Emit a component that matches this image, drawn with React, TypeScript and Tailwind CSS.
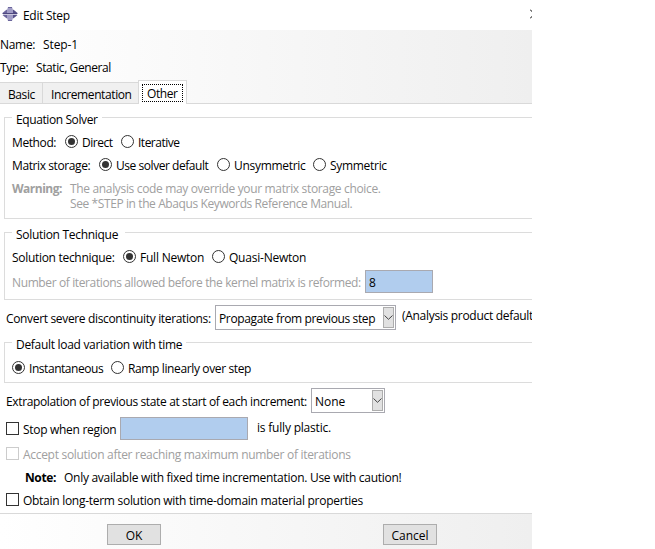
import React from 'react';
import clsx from 'clsx';

type LabelProps = {
  className?: string;
  children: React.ReactNode;
};

// single line of dialog text
const Label = ({ className, children }: LabelProps) => (
  <span className={clsx('block h-4 shrink-0 leading-[17px] whitespace-pre', className)}>
    {children}
  </span>
);

const Radio = ({ checked }: { checked?: boolean }) => (
  <svg className="block size-[13px] shrink-0" viewBox="0 0 13 13">
    <circle cx="6.5" cy="6.5" r="6" fill="#fff" stroke="#333" />
    {checked && <circle cx="6.5" cy="6.5" r="3.5" fill="#333" />}
  </svg>
);

const Checkbox = ({ disabled }: { disabled?: boolean }) => (
  <span
    className={clsx(
      'block size-[13px] shrink-0 border bg-white',
      disabled ? 'border-[#cccccc]' : 'border-[#333333]'
    )}
  />
);

const Select = ({ className, children }: LabelProps) => (
  <div
    className={clsx(
      'flex h-[25px] shrink-0 items-center justify-between border border-[#a9a9b0] bg-white pr-px pl-[3px]',
      className
    )}
  >
    {children}
    <span className="flex h-[21px] w-[11px] items-center justify-center border border-[#adadad] bg-[#e1e1e1]">
      <svg className="block h-[5px] w-[9px] shrink-0" viewBox="0 0 9 5">
        <path d="M0.5 0.5L4.5 4.3L8.5 0.5" fill="none" stroke="#444" />
      </svg>
    </span>
  </div>
);

type GroupProps = {
  title: string;
  titleClass: string;
  className: string;
  children: React.ReactNode;
};

const Group = ({ title, titleClass, className, children }: GroupProps) => (
  <section className={clsx('ml-1 shrink-0 border-y border-l border-[#dcdcdc]', className)}>
    <h2 className={clsx('-mt-[7px] ml-[7px] h-4 bg-white pl-1 leading-[17px] whitespace-pre', titleClass)}>
      {title}
    </h2>
    {children}
  </section>
);

const App = () => {
  return (
    <div className="h-[549px] w-[655px] bg-white">
      <div className="flex h-full w-[532px] flex-col overflow-hidden font-['Open_Sans','Noto_Sans',sans-serif] text-[12px] tracking-[-0.3px] text-black">
        <header className="flex h-[30px] shrink-0 items-center pl-[2px]">
          <svg className="mt-[-2px] block size-4 shrink-0" viewBox="0 0 16 16">
            <path d="M5 4L6 1H10L11 4V7H5Z" fill="#a19dc6" />
            <path d="M5 12L6 15H10L11 12V9H5Z" fill="#a19dc6" />
            <path d="M5 3.500V7H0.500L3.500 4.500Z" fill="#6b659c" />
            <path d="M11 3.500V7H15.500L12.500 4.500Z" fill="#565089" />
            <path d="M5 12.500V9H0.500L3.500 11.500Z" fill="#6b659c" />
            <path d="M11 12.500V9H15.500L12.500 11.500Z" fill="#565089" />
            <path d="M6 1.500H10M6 14.500H10" stroke="#6b659c" />
            <path d="M0.500 7.500H15.500" stroke="#4d477f" />
            <path d="M1 8.500H15" stroke="#c9c7dc" />
          </svg>
          <Label className="ml-[5px] w-[507px]">Edit Step</Label>
          <svg className="block size-[10px] shrink-0 mt-[-2px]" viewBox="0 0 10 10">
            <path d="M0 0.500L9.500 10M0 9.500L9.500 0" stroke="#000" />
          </svg>
        </header>

        <div className="flex h-[74px] shrink-0 flex-col bg-linear-to-r from-white to-[#efefef]">
          <div className="flex h-[23px] pt-[6px]">
            <Label className="w-[43px]">Name:</Label>
            <Label className="tracking-[-0.1px]">Step-1</Label>
          </div>
          <div className="flex h-[27px] pt-[6px]">
            <Label className="w-[36px]">Type:</Label>
            <Label className="tracking-[-0.4px]">Static, General</Label>
          </div>
          <nav className="flex h-6 items-end tracking-[-0.4px]">
            <div className="h-[22px] w-[42px] border-y border-[#d9d9d9] bg-[#f0f0f0] pt-[3px] pl-2">
              <Label>Basic</Label>
            </div>
            <div className="h-[22px] w-[96px] border-y border-l border-[#d9d9d9] bg-[#f0f0f0] pt-[3px] pl-2">
              <Label>Incrementation</Label>
            </div>
            <div className="h-6 w-[49px] border-x border-t border-[#d9d9d9] bg-white p-[3px]">
              <div className="h-[18px] border border-dotted border-black pl-1">
                <Label>Other</Label>
              </div>
            </div>
            <div className="h-px flex-1 bg-[#d9d9d9]" />
          </nav>
        </div>

        <main className="flex h-[409px] shrink-0 flex-col pt-[13px]">
          <Group title="Equation Solver" titleClass="w-[90px] tracking-[-0.4px]" className="h-[102px]">
            <div className="mt-[3px] flex h-[23px] items-center pl-[7px] tracking-[-0.5px]">
              <Label className="w-[53px] tracking-[-0.4px]">Method:</Label>
              <Radio checked />
              <Label className="w-[43px] pl-1">Direct</Label>
              <Radio />
              <Label className="pl-1">Iterative</Label>
            </div>
            <div className="flex h-[23px] items-center pl-[7px]">
              <Label className="w-[87px] tracking-[-0.4px]">Matrix storage:</Label>
              <Radio checked />
              <Label className="w-[105px] pl-1 tracking-[-0.45px]">Use solver default</Label>
              <Radio />
              <Label className="w-[83px] pl-1">Unsymmetric</Label>
              <Radio />
              <Label className="pl-1">Symmetric</Label>
            </div>
            <div className="flex pt-[4px] pl-[7px] text-[#a0a0a0]">
              <Label className="w-[58px] font-bold tracking-[-0.5px]">Warning:</Label>
              <div className="flex flex-col">
                <Label className="-mb-px tracking-[-0.34px]">
                  The analysis code may override your matrix storage choice.
                </Label>
                <Label className="tracking-[-0.4px]">See *STEP in the Abaqus Keywords Reference Manual.</Label>
              </div>
            </div>
          </Group>

          <Group title="Solution Technique" titleClass="w-[113px]" className="mt-[13px] h-[68px]">
            <div className="mt-[2px] flex h-[25px] items-center pl-[7px]">
              <Label className="w-[111px] tracking-[-0.3px]">Solution technique:</Label>
              <Radio checked />
              <Label className="w-[76px] pl-1 tracking-[-0.22px]">Full Newton</Label>
              <Radio />
              <Label className="pl-1 tracking-[-0.22px]">Quasi-Newton</Label>
            </div>
            <div className="mt-[1px] flex h-[23px] items-center pl-[7px]">
              <Label className="w-[353px] tracking-[-0.38px] text-[#a0a0a0]">
                Number of iterations allowed before the kernel matrix is reformed:
              </Label>
              <div className="flex h-[23px] w-[68px] items-center border border-[#a9a9b0] bg-[#b1cdee] pl-[3px]">
                <Label>8</Label>
              </div>
            </div>
          </Group>

          <div className="mt-[5px] flex h-[25px] shrink-0 items-center pl-[6px]">
            <Label className="w-[209px] tracking-[-0.34px]">Convert severe discontinuity iterations:</Label>
            <Select className="w-[181px]">
              <Label className="tracking-[-0.37px]">Propagate from previous step</Label>
            </Select>
            <Label className="-mt-[5px] ml-[6px] w-[130px] overflow-hidden tracking-[-0.3px]">
              (Analysis product default
            </Label>
          </div>

          <Group title="Default load variation with time" titleClass="w-[174px]" className="mt-[12px] h-[41px]">
            <div className="mt-[4px] flex h-[23px] items-center pl-[7px]">
              <Radio checked />
              <Label className="w-[86px] pl-1 tracking-[-0.45px]">Instantaneous</Label>
              <Radio />
              <Label className="pl-1 tracking-[-0.37px]">Ramp linearly over step</Label>
            </div>
          </Group>

          <div className="mt-[5px] flex h-[25px] shrink-0 items-center pl-[6px]">
            <Label className="w-[305px] tracking-[-0.36px]">
              Extrapolation of previous state at start of each increment:
            </Label>
            <Select className="w-[74px]">
              <Label className="tracking-normal">None</Label>
            </Select>
          </div>
          <div className="mt-[4px] flex h-[23px] shrink-0 items-center pl-[6px]">
            <Checkbox />
            <Label className="w-[101px] pl-1">Stop when region</Label>
            <div className="h-[23px] w-[128px] border border-[#a9a9b0] bg-[#b1cdee]" />
            <Label className="-mt-[3px] ml-[9px] tracking-[-0.2px]">is fully plastic.</Label>
          </div>
          <div className="mt-[2px] flex h-[23px] shrink-0 items-center pl-[6px] text-[#a0a0a0]">
            <Checkbox disabled />
            <Label className="pl-1">Accept solution after reaching maximum number of iterations</Label>
          </div>
          <div className="flex h-[23px] shrink-0 items-center pl-[25px]">
            <Label className="w-[39px] font-bold tracking-[-0.4px]">Note:</Label>
            <Label className="tracking-[-0.28px]">
              Only available with fixed time incrementation. Use with caution!
            </Label>
          </div>
          <div className="flex h-[23px] shrink-0 items-center pl-[6px]">
            <Checkbox />
            <Label className="pl-1 tracking-[-0.28px]">
              Obtain long-term solution with time-domain material properties
            </Label>
          </div>
        </main>

        <footer className="flex h-9 shrink-0 border-t border-[#d9d9d9] bg-linear-to-r from-white to-[#efefef] pt-[10px] pl-[107px] tracking-normal">
          <button className="flex h-[21px] w-[54px] items-center justify-center border border-[#adadad] bg-[#e1e1e1]">
            <Label>OK</Label>
          </button>
          <button className="ml-[222px] flex h-[21px] w-[54px] items-center justify-center border border-[#adadad] bg-[#e1e1e1]">
            <Label>Cancel</Label>
          </button>
        </footer>
      </div>
    </div>
  );
};

export default App;
